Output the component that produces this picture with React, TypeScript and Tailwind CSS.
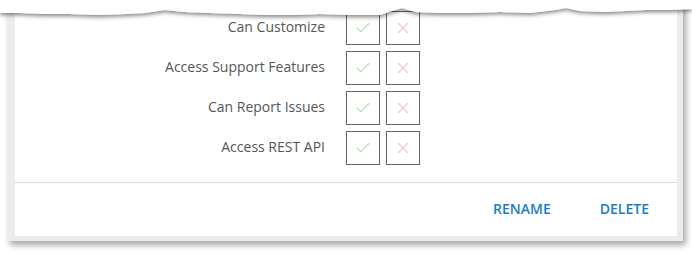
import { Check, X } from 'lucide-react';

const permissions = [
  'Can Customize',
  'Access Support Features',
  'Can Report Issues',
  'Access REST API',
];

// torn paper edge across the top of the screenshot
function TornEdge() {
  const wave =
    'M0,13 L20,13 L45,14 L70,14 L100,15 L125,14 L145,13 L165,10 L185,12 L210,13 L240,14 L265,15 L295,15 L320,14 L350,15 L380,15 L392,11 L402,8 L415,12 L440,13 L470,13 L500,12 L530,13 L555,10 L566,8 L580,11 L605,12 L625,11 L645,10 L670,10 L692,9';
  return (
    <svg className="absolute left-0 top-0" width="692" height="30" viewBox="0 0 692 30">
      <defs>
        <filter id="tear" x="-5%" y="-50%" width="110%" height="200%">
          <feDropShadow dx="0" dy="2" stdDeviation="2" floodColor="#000" floodOpacity="0.5" />
        </filter>
      </defs>
      <path d={`${wave} L692,0 L0,0 Z`} fill="#ffffff" filter="url(#tear)" />
    </svg>
  );
}

export default function App() {
  return (
    <div className="relative w-[692px] h-[253px] bg-white overflow-hidden" style={{ fontFamily: '"Open Sans", "Liberation Sans", sans-serif' }}>
      <div className="ml-[7px] w-[676px] h-[241px] bg-[#ececec] pl-[8px] pr-[6px] pb-[5px] shadow-[3px_4px_6px_rgba(0,0,0,0.35)]">
        <div className="h-full bg-white flex flex-col">
          <div className="pt-[11px] flex flex-col gap-[6px]">
            {permissions.map((label) => (
              <div key={label} className="flex items-center h-[34px]">
                <span className="w-[311px] text-right text-[14px] leading-[20px] text-[#555] pr-px -mt-[3px]">{label}</span>
                <div className="ml-[20px] flex gap-[6px]">
                  <div className="w-[34px] h-[34px] border border-[#666] flex items-center justify-center">
                    <Check size={18} strokeWidth={1.5} className="text-[#bcdcbc]" />
                  </div>
                  <div className="w-[34px] h-[34px] border border-[#666] flex items-center justify-center">
                    <X size={18} strokeWidth={1.5} className="text-[#f7c4c4]" />
                  </div>
                </div>
              </div>
            ))}
          </div>
          <div className="mt-[17px] border-t border-[#dcdcdc]" />
          <div className="flex-1 flex items-center justify-end gap-[49px] pr-[28px] pb-[2px]">
            <button className="text-[14px] font-semibold text-[#1a7dc4]">RENAME</button>
            <button className="text-[14px] font-semibold text-[#1a7dc4]">DELETE</button>
          </div>
        </div>
      </div>
      <TornEdge />
    </div>
  );
}
